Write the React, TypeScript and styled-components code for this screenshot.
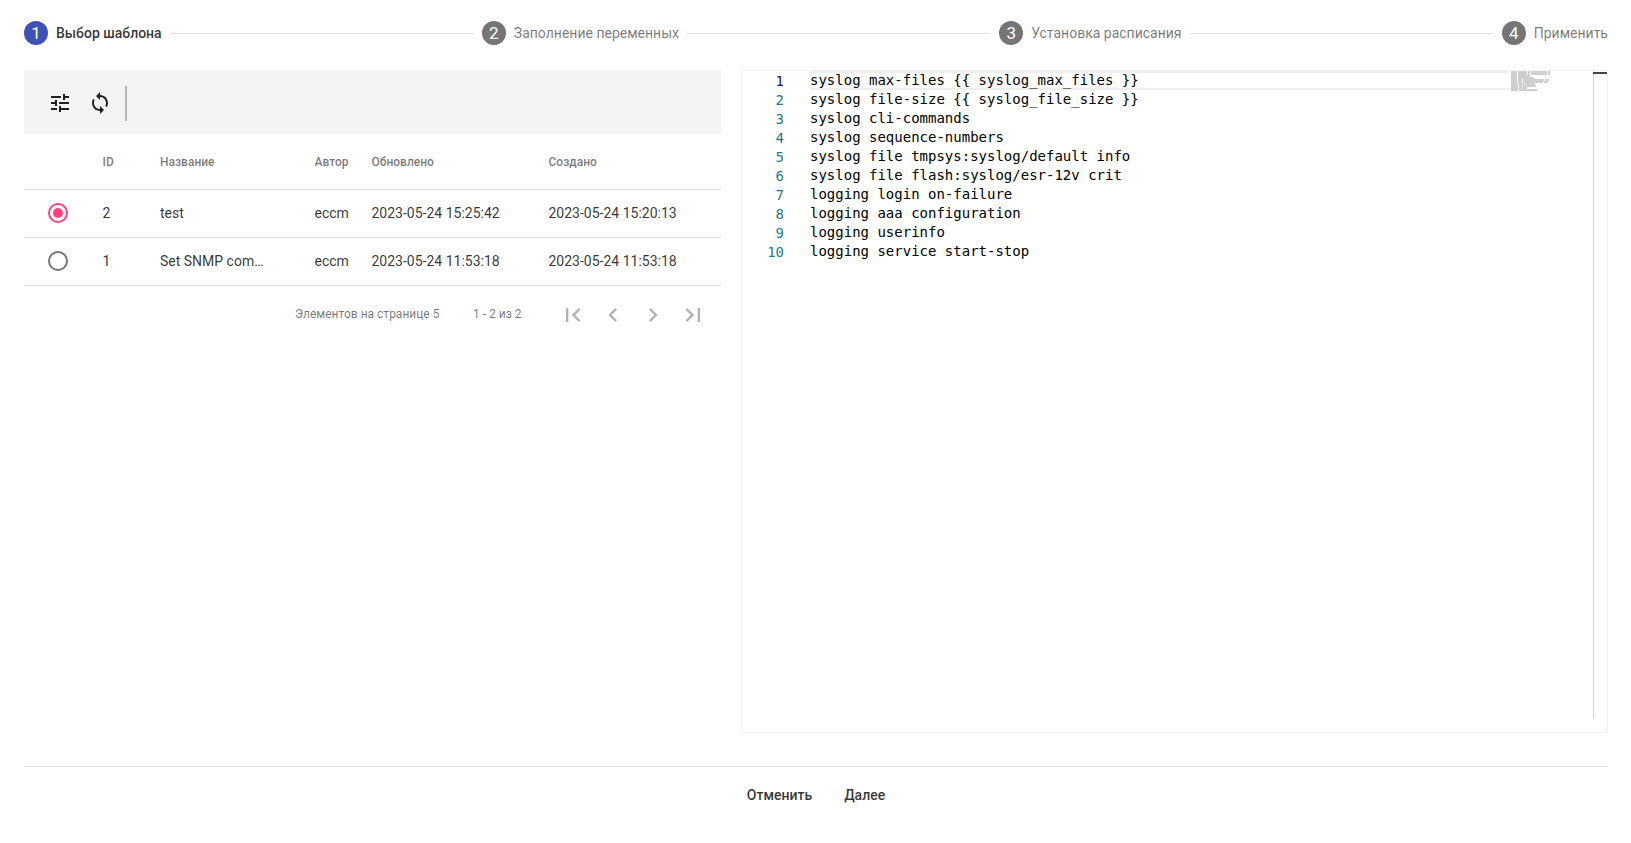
import React from "react";
import styled, { createGlobalStyle } from "styled-components";

const Global = createGlobalStyle`
  html, body { margin: 0; padding: 0; background: #fff; }
  body { font-family: Roboto, "Liberation Sans", sans-serif; color: rgba(0,0,0,.87); }
  * { box-sizing: border-box; }
`;

const Page = styled.div`
  width: 1631px;
  height: 843px;
  padding: 21px 23px 0 24px;
  display: flex;
  flex-direction: column;
  overflow: hidden;
`;

const Stepper = styled.div`
  display: flex;
  align-items: center;
  height: 24px;
`;
const Step = styled.div`
  display: flex;
  align-items: center;
  gap: 8px;
  flex: none;
`;
const StepCircle = styled.div<{ $active?: boolean }>`
  width: 24px;
  height: 24px;
  border-radius: 50%;
  background: ${(p) => (p.$active ? "#3f51b5" : "#757575")};
  color: #fff;
  font-size: 17px;
  display: flex;
  align-items: center;
  justify-content: center;
`;
const StepLabel = styled.span<{ $active?: boolean }>`
  font-size: 14px;
  font-weight: ${(p) => (p.$active ? 500 : 400)};
  color: ${(p) => (p.$active ? "rgba(0,0,0,.8)" : "rgba(0,0,0,.54)")};
`;
const StepLine = styled.div`
  flex: 1;
  height: 1px;
  background: #e0e0e0;
  margin: 0 8px;
`;

const Body = styled.div`
  display: flex;
  margin-top: 25px;
  gap: 20px;
  height: 663px;
`;
const LeftPane = styled.div`
  width: 697px;
  flex: none;
`;
const Toolbar = styled.div`
  height: 64px;
  background: #f4f4f4;
  display: flex;
  align-items: center;
  padding: 2px 0 0 16px;
`;
const ToolButton = styled.button`
  width: 40px;
  height: 40px;
  border: 0;
  padding: 0;
  background: transparent;
  color: rgba(0,0,0,.87);
  display: flex;
  align-items: center;
  justify-content: center;
`;
const ToolDivider = styled.div`
  width: 2px;
  height: 35px;
  background: #b5b5b5;
  margin-left: 5px;
`;

const Table = styled.div`
  display: grid;
  grid-template-columns: 78.5px 57.5px 154.5px 57px 177px 1fr;
`;
const HeadCell = styled.div`
  height: 56px;
  display: flex;
  align-items: center;
  font-size: 12px;
  font-weight: 500;
  color: rgba(0,0,0,.54);
  border-bottom: 1px solid #e0e0e0;
`;
const Cell = styled.div`
  height: 48px;
  padding-bottom: 2px;
  display: flex;
  align-items: center;
  font-size: 14px;
  color: rgba(0,0,0,.8);
  border-bottom: 1px solid #e0e0e0;
  white-space: nowrap;
`;
const RadioCell = styled(Cell)`
  padding-left: 24px;
`;
const Radio = styled.span<{ $checked?: boolean }>`
  width: 20px;
  height: 20px;
  border-radius: 50%;
  border: 2.5px solid ${(p) => (p.$checked ? "#ff4081" : "#757575")};
  display: flex;
  align-items: center;
  justify-content: center;
  &::after {
    content: "";
    width: 10px;
    height: 10px;
    border-radius: 50%;
    background: ${(p) => (p.$checked ? "#ff4081" : "transparent")};
  }
`;

const Paginator = styled.div`
  height: 56px;
  display: flex;
  align-items: center;
  font-size: 12px;
  color: rgba(0,0,0,.54);
  padding-left: 271px;
`;
const PageSize = styled.span`
  width: 178px;
  flex: none;
`;
const Range = styled.span`
  width: 80px;
  flex: none;
`;
const PageButton = styled.span`
  width: 40px;
  height: 40px;
  padding-top: 2px;
  flex: none;
  display: flex;
  align-items: center;
  justify-content: center;
  color: rgba(0,0,0,.3);
`;

const Editor = styled.div`
  position: relative;
  width: 867px;
  flex: none;
  height: 663px;
  border: 1px solid #f2f2f2;
  background: #fffffe;
  font-family: "DejaVu Sans Mono", monospace;
  font-size: 14px;
  overflow: hidden;
`;
const CodeLine = styled.div`
  position: relative;
  z-index: 1;
  display: flex;
  height: 19px;
  line-height: 19px;
  white-space: pre;
  color: #000;
`;
const LineNo = styled.span<{ $current?: boolean }>`
  width: 42px;
  margin-right: 26px;
  padding-top: 1px;
  text-align: right;
  flex: none;
  color: ${(p) => (p.$current ? "#0b216f" : "#237893")};
`;
const CurrentLineBox = styled.div`
  position: absolute;
  top: 0;
  left: 68px;
  width: 700px;
  height: 19px;
  border: 2px solid #eeeeee;
  border-left: 0;
  border-right: 0;
`;
const Minimap = styled.svg`
  position: absolute;
  top: 0;
  left: 769px;
`;
const ScrollRule = styled.div`
  position: absolute;
  top: 0;
  left: 851px;
  width: 1px;
  height: 648px;
  background: #d4d4d4;
`;
const ScrollMark = styled.div`
  position: absolute;
  top: 1px;
  left: 851px;
  width: 14px;
  height: 2px;
  background: #444;
`;

const Footer = styled.div`
  margin-top: 33px;
  border-top: 1px solid #e0e0e0;
  height: 56px;
  display: flex;
  justify-content: center;
  align-items: center;
  gap: 16px;
`;
const TextButton = styled.button`
  border: 0;
  background: transparent;
  padding: 0 8px;
  height: 36px;
  font: 500 14px Roboto, sans-serif;
  color: rgba(0,0,0,.8);
`;

const Svg = ({ d, c = 24 }: { d: string; c?: number }) => (
  <svg width={c} height={c} viewBox="0 0 24 24" fill="currentColor"><path d={d} /></svg>
);

const rows = [
  { id: "2", name: "test", author: "eccm", up: "2023-05-24 15:25:42", cr: "2023-05-24 15:20:13", on: true },
  { id: "1", name: "Set SNMP com…", author: "eccm", up: "2023-05-24 11:53:18", cr: "2023-05-24 11:53:18", on: false },
];
const code = [
  "syslog max-files {{ syslog_max_files }}",
  "syslog file-size {{ syslog_file_size }}",
  "syslog cli-commands",
  "syslog sequence-numbers",
  "syslog file tmpsys:syslog/default info",
  "syslog file flash:syslog/esr-12v crit",
  "logging login on-failure",
  "logging aaa configuration",
  "logging userinfo",
  "logging service start-stop",
];

export default function App() {
  return (
    <Page>
      <Global />
      <Stepper>
        <Step><StepCircle $active>1</StepCircle><StepLabel $active>Выбор шаблона</StepLabel></Step>
        <StepLine />
        <Step><StepCircle>2</StepCircle><StepLabel>Заполнение переменных</StepLabel></Step>
        <StepLine />
        <Step><StepCircle>3</StepCircle><StepLabel>Установка расписания</StepLabel></Step>
        <StepLine />
        <Step><StepCircle>4</StepCircle><StepLabel>Применить</StepLabel></Step>
      </Stepper>
      <Body>
        <LeftPane>
          <Toolbar>
            <ToolButton><Svg d="M3 17v2h6v-2H3zM3 5v2h10V5H3zm10 16v-2h8v-2h-8v-2h-2v6h2zM7 9v2H3v2h4v2h2V9H7zm14 4v-2H11v2h10zm-6-4h2V7h4V5h-4V3h-2v6z" /></ToolButton>
            <ToolButton><Svg d="M12 4V1L8 5l4 4V6c3.31 0 6 2.69 6 6 0 1.01-.25 1.97-.7 2.8l1.46 1.46C19.54 15.03 20 13.57 20 12c0-4.42-3.58-8-8-8zm0 14c-3.31 0-6-2.69-6-6 0-1.01.25-1.97.7-2.8L5.24 7.74C4.46 8.97 4 10.43 4 12c0 4.42 3.58 8 8 8v3l4-4-4-4v3z" /></ToolButton>
            <ToolDivider />
          </Toolbar>
          <Table>
            <HeadCell />
            <HeadCell>ID</HeadCell>
            <HeadCell>Название</HeadCell>
            <HeadCell>Автор</HeadCell>
            <HeadCell>Обновлено</HeadCell>
            <HeadCell>Создано</HeadCell>
            {rows.map((r) => (
              <React.Fragment key={r.id}>
                <RadioCell><Radio $checked={r.on} /></RadioCell>
                <Cell>{r.id}</Cell>
                <Cell>{r.name}</Cell>
                <Cell>{r.author}</Cell>
                <Cell>{r.up}</Cell>
                <Cell>{r.cr}</Cell>
              </React.Fragment>
            ))}
          </Table>
          <Paginator>
            <PageSize>Элементов на странице 5</PageSize>
            <Range>1 - 2 из 2</Range>
            <PageButton><Svg c={28} d="M18.41 16.59L13.82 12l4.59-4.59L17 6l-6 6 6 6zM6 6h2v12H6z" /></PageButton>
            <PageButton><Svg c={28} d="M15.41 7.41L14 6l-6 6 6 6 1.41-1.41L10.83 12z" /></PageButton>
            <PageButton><Svg c={28} d="M10 6L8.59 7.41 13.17 12l-4.58 4.59L10 18l6-6z" /></PageButton>
            <PageButton><Svg c={28} d="M5.59 7.41L10.18 12l-4.59 4.59L7 18l6-6-6-6zM16 6h2v12h-2z" /></PageButton>
          </Paginator>
        </LeftPane>
        <Editor>
          <CurrentLineBox />
          {code.map((c, i) => (
            <CodeLine key={i}>
              <LineNo $current={i === 0}>{i + 1}</LineNo>
              <span>{c}</span>
            </CodeLine>
          ))}
          <Minimap width="40" height="22">
            {code.map((c, y) =>
              c.split("").map((ch, x) =>
                ch === " " ? null : <rect key={`${y}-${x}`} x={x} y={y * 2 + 0.5} width="0.7" height="1" fill="#777" />
              )
            )}
          </Minimap>
          <ScrollRule />
          <ScrollMark />
        </Editor>
      </Body>
      <Footer>
        <TextButton>Отменить</TextButton>
        <TextButton>Далее</TextButton>
      </Footer>
    </Page>
  );
}
